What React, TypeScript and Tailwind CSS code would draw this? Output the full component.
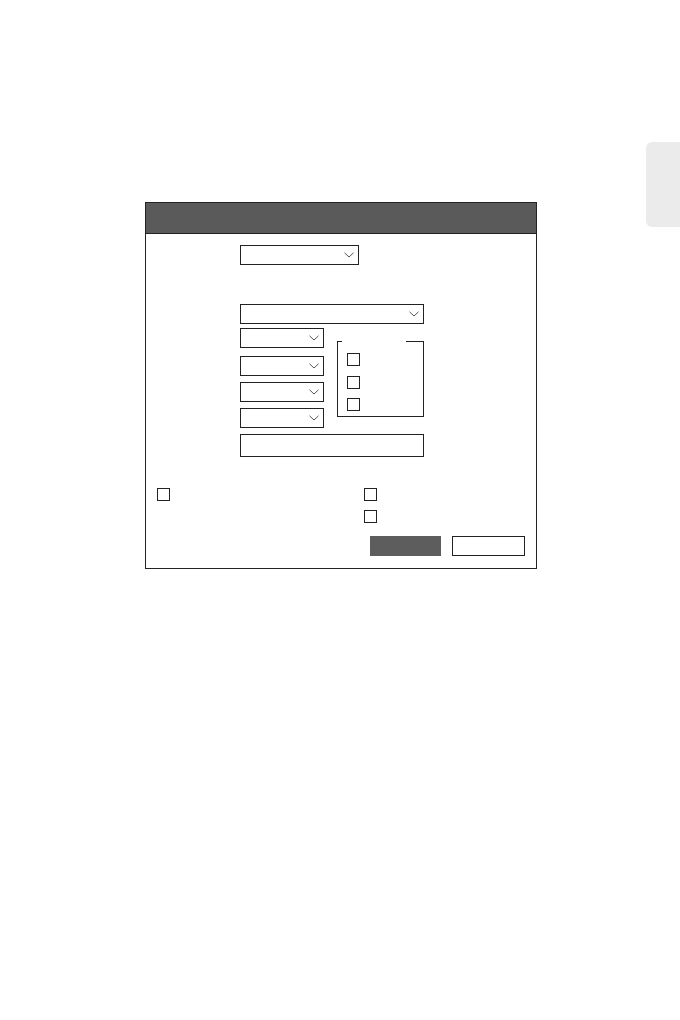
import React from "react";

const Chevron = () => (
  <svg width="10" height="6" viewBox="0 0 10 6" className="block">
    <polyline points="0.5,0.8 5,5 9.5,0.8" fill="none" stroke="#555" strokeWidth="1" />
  </svg>
);

function Select({ className }: { className: string }) {
  return (
    <div className={`h-[20px] border border-[#222] bg-white flex items-center justify-end pr-[4px] ${className}`}>
      <Chevron />
    </div>
  );
}

const Box = ({ className = "" }: { className?: string }) => (
  <div className={`w-[13px] h-[13px] border border-[#222] bg-white shrink-0 ${className}`} />
);

export default function App() {
  return (
    <div className="relative w-[680px] h-[1020px] bg-white overflow-hidden" style={{ fontFamily: '"Liberation Sans", Arial, sans-serif' }}>
      <div className="absolute right-0 top-[142px] w-[34px] h-[85px] bg-[#ebebeb] rounded-l-[6px]" />
      <div className="pt-[202px]">
        <div className="ml-[145px] w-[392px] h-[367px] border border-[#222] flex flex-col">
          <div className="h-[31px] bg-[#5a5a5a] border-b border-[#222]" />
          <div className="flex flex-col pl-[94px] pt-[11px]">
            <Select className="w-[119px]" />
            <Select className="w-[184px] mt-[39px]" />
            <div className="flex items-start mt-[4px]">
              <div className="flex flex-col">
                <Select className="w-[84px]" />
                <Select className="w-[84px] mt-[8px]" />
                <Select className="w-[84px] mt-[6px]" />
                <Select className="w-[84px] mt-[6px]" />
              </div>
              <div className="ml-[13px] mt-[13px] w-[87px] h-[76px] flex flex-col">
                <div className="flex h-[1px]">
                  <div className="w-[5px] border-t border-[#222]" />
                  <div className="w-[64px]" />
                  <div className="flex-1 border-t border-[#222]" />
                </div>
                <div className="flex-1 border-l border-r border-b border-[#222] flex flex-col pl-[9px] pt-[11px]">
                  <Box />
                  <Box className="mt-[10px]" />
                  <Box className="mt-[9px]" />
                </div>
              </div>
            </div>
            <div className="w-[184px] h-[23px] border border-[#222] mt-[6px]" />
          </div>
          <div className="flex pl-[11px] mt-[31px]">
            <div className="w-[207px]">
              <Box />
            </div>
            <div className="flex flex-col">
              <Box />
              <Box className="mt-[9px]" />
            </div>
          </div>
          <div className="flex justify-end gap-[11px] pr-[11px] mt-[13px]">
            <div className="w-[71px] h-[20px] bg-[#5d5d5d]" />
            <div className="w-[73px] h-[20px] border border-[#222] bg-white" />
          </div>
        </div>
      </div>
    </div>
  );
}
